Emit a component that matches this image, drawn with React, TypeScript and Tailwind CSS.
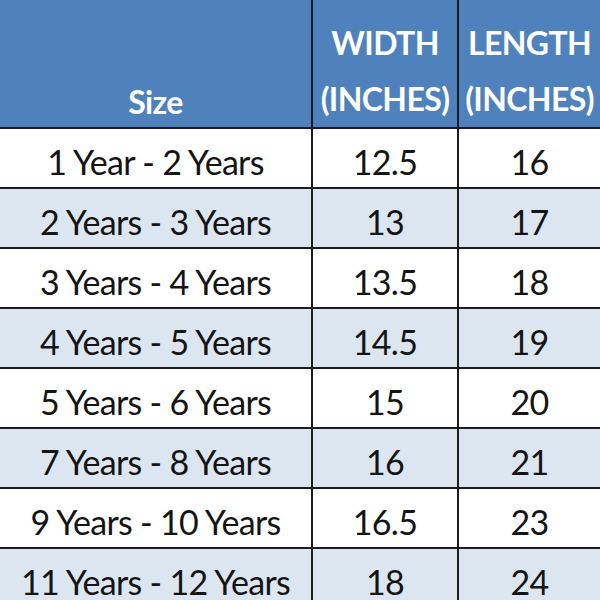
import React from 'react';

type Row = [string, string, string];

const rows: Row[] = [
  ['1 Year - 2 Years', '12.5', '16'],
  ['2 Years - 3 Years', '13', '17'],
  ['3 Years - 4 Years', '13.5', '18'],
  ['4 Years - 5 Years', '14.5', '19'],
  ['5 Years - 6 Years', '15', '20'],
  ['7 Years - 8 Years', '16', '21'],
  ['9 Years - 10 Years', '16.5', '23'],
  ['11 Years - 12 Years', '18', '24'],
];

const App = () => {
  return (
    <div className="h-[600px] w-[600px] overflow-hidden bg-white font-['Lato',sans-serif] text-[#141414]">
      {/* header */}
      <div className="flex h-[127px] bg-[#4f81bd] text-[32px] font-bold leading-[56px] tracking-[-0.6px] text-white">
        <div className="flex w-[313px] flex-col items-center justify-end border-r-2 border-[#1c1c1c]">
          <span className="leading-[50px]">Size</span>
        </div>
        <div className="flex w-[146px] flex-col items-center justify-end border-r-2 border-[#1c1c1c]">
          <span>WIDTH</span>
          <span>(INCHES)</span>
        </div>
        <div className="flex flex-1 flex-col items-center justify-end">
          <span>LENGTH</span>
          <span>(INCHES)</span>
        </div>
      </div>

      {rows.map(([size, width, length], i) => (
        <div
          key={size}
          className={`flex h-[60px] border-t-2 border-[#1c1c1c] text-[34px] tracking-[-0.7px] ${i % 2 === 1 ? 'bg-[#dce6f1]' : 'bg-white'}`}
        >
          <div className="flex w-[313px] items-center justify-center border-r-2 border-[#1c1c1c] pt-[6px]">{size}</div>
          <div className="flex w-[146px] items-center justify-center border-r-2 border-[#1c1c1c] pt-[6px]">{width}</div>
          <div className="flex flex-1 items-center justify-center pt-[6px]">{length}</div>
        </div>
      ))}
    </div>
  );
};

export default App;
